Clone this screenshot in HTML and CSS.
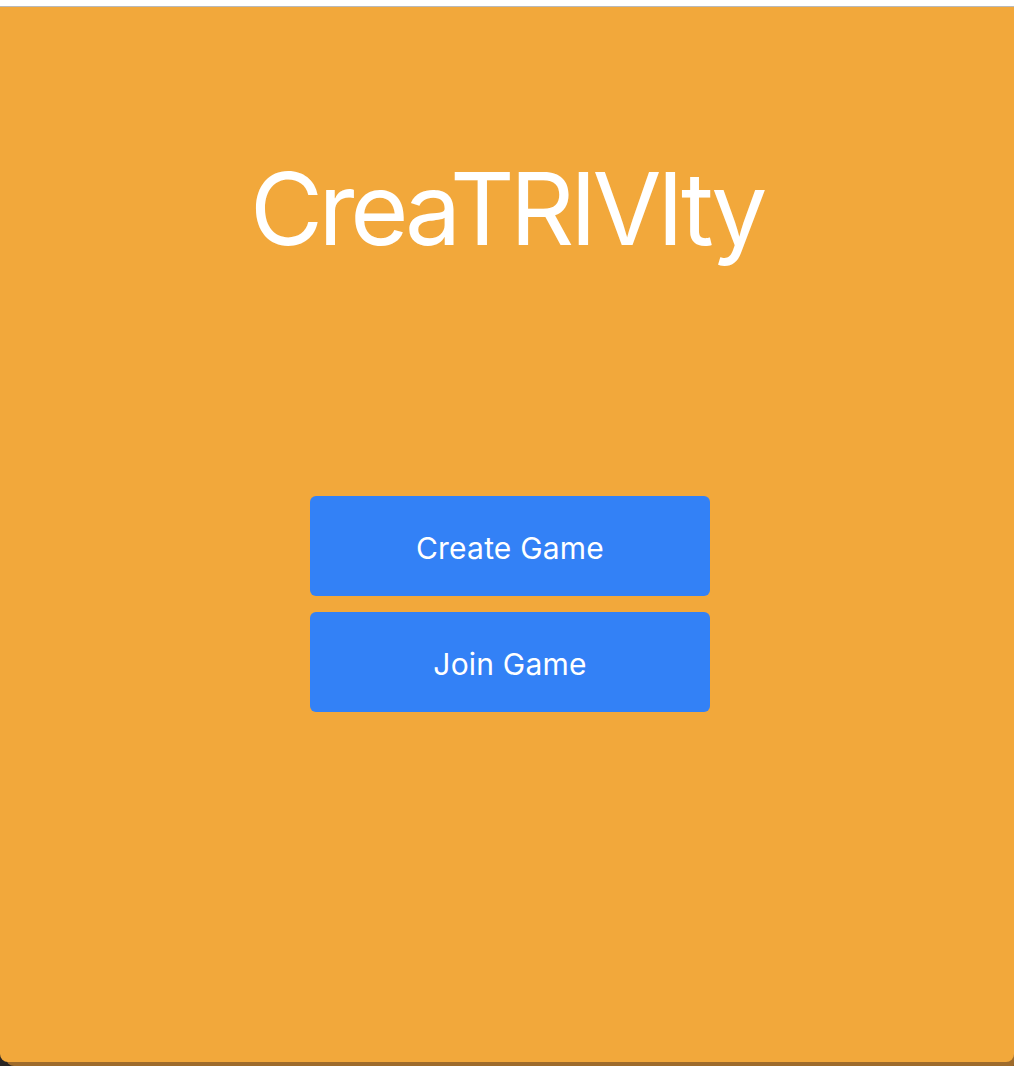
FILE: index.html
```html
<!DOCTYPE html>
<html lang="en">
<head>
<meta charset="utf-8">
<title>CreaTRIVIty</title>
<link rel="stylesheet" href="styles.css">
</head>
<body>
<div class="stage">
  <main class="card">
    <h1 class="title">CreaTRIVIty</h1>
    <div class="actions">
      <button class="btn">Create Game</button>
      <button class="btn">Join Game</button>
    </div>
  </main>
</div>
</body>
</html>
```
FILE: styles.css
```css
html, body {
  margin: 0;
  padding: 0;
  background: #ffffff;
}
body {
  font-family: Inter, "Noto Sans", "Liberation Sans", sans-serif;
  height: 1066px;
  overflow: hidden;
}
.stage {
  margin-top: 6px;
  height: 1060px;
  background: #2a2624;
  border-top: 1px solid #b9b9b9;
  box-sizing: border-box;
}
.card {
  height: 1055px;
  background: #f2a83b;
  border-radius: 0 0 8px 8px;
  box-shadow: 6px 4px 0 #9e6b2c;
  display: flex;
  flex-direction: column;
  align-items: center;
  padding-top: 152px;
  padding-left: 6px;
  box-sizing: border-box;
}
.title {
  margin: 0;
  padding-right: 7px;
  font-size: 100px;
  line-height: 100px;
  font-weight: 400;
  color: #ffffff;
  letter-spacing: -4.4px;
}
.actions {
  margin-top: 237px;
  display: flex;
  flex-direction: column;
  gap: 16px;
}
.btn {
  width: 400px;
  height: 100px;
  border: none;
  border-radius: 6px;
  background: #3381f6;
  color: #ffffff;
  font-family: inherit;
  font-size: 30px;
  letter-spacing: 0.2px;
  padding: 3px 0 0;
}
```
